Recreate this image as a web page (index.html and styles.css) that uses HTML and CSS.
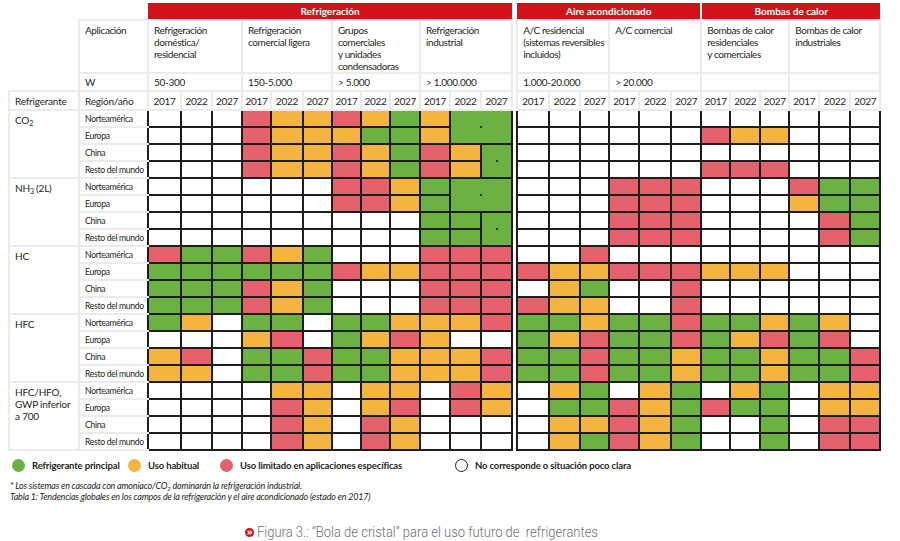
FILE: index.html
```html
<!DOCTYPE html>
<html lang="es">
<head>
<meta charset="utf-8">
<title>Bola de cristal</title>
<link rel="stylesheet" href="styles.css">
</head>
<body>
<table class="chart">
<colgroup>
<col class="c-ref"><col class="c-reg">
<col class="w33"><col class="w31"><col class="w30"><col class="w29"><col class="w32"><col class="w29"><col class="w29"><col class="w29"><col class="w30"><col class="w30"><col class="w31"><col class="w31">
<col class="c-gap">
<col class="w32"><col class="w31"><col class="w29"><col class="w30"><col class="w32"><col class="w30"><col class="w29"><col class="w30"><col class="w29"><col class="w30"><col class="w31"><col class="w30">
</colgroup>
<tr class="ra"><td></td><td></td><td colspan="12" class="red">Refrigeración</td><td class="gap"></td><td colspan="6" class="red split">Aire acondicionado</td><td colspan="6" class="red">Bombas de calor</td></tr>
<tr class="rb"><td></td><td class="hd app">Aplicación</td><td colspan="3" class="hd app">Refrigeración<br>doméstica/<br>residencial</td><td colspan="3" class="hd app">Refrigeración<br>comercial ligera</td><td colspan="3" class="hd app">Grupos<br>comerciales<br>y unidades<br>condensadoras</td><td colspan="3" class="hd app">Refrigeración<br>industrial</td><td class="gap"></td><td colspan="3" class="hd app">A/C residencial<br>(sistemas reversibles<br>incluidos)</td><td colspan="3" class="hd app">A/C comercial</td><td colspan="3" class="hd app">Bombas de calor<br>residenciales<br>y comerciales</td><td colspan="3" class="hd app">Bombas de calor<br>industriales</td></tr>
<tr class="rc"><td></td><td class="hd pw">W</td><td colspan="3" class="hd pw">50-300</td><td colspan="3" class="hd pw">150-5.000</td><td colspan="3" class="hd pw">&gt; 5.000</td><td colspan="3" class="hd pw">&gt; 1.000.000</td><td class="gap"></td><td colspan="3" class="hd pw">1.000-20.000</td><td colspan="3" class="hd pw">&gt; 20.000</td><td colspan="3" class="hd pw"></td><td colspan="3" class="hd pw"></td></tr>
<tr class="rd"><td class="hd lab">Refrigerante</td><td class="hd lab">Región/año</td><td class="hd yr">2017</td><td class="hd yr">2022</td><td class="hd yr">2027</td><td class="hd yr">2017</td><td class="hd yr">2022</td><td class="hd yr">2027</td><td class="hd yr">2017</td><td class="hd yr">2022</td><td class="hd yr">2027</td><td class="hd yr">2017</td><td class="hd yr">2022</td><td class="hd yr">2027</td><td class="gap"></td><td class="hd yr">2017</td><td class="hd yr">2022</td><td class="hd yr">2027</td><td class="hd yr">2017</td><td class="hd yr">2022</td><td class="hd yr">2027</td><td class="hd yr">2017</td><td class="hd yr">2022</td><td class="hd yr">2027</td><td class="hd yr">2017</td><td class="hd yr">2022</td><td class="hd yr">2027</td></tr>

<!-- CO2 -->
<tr class="dr"><td rowspan="4" class="ref">CO<sub>2</sub></td><td class="reg">Norteamérica</td>
<td class="w"></td><td class="w"></td><td class="w"></td><td class="r"></td><td class="o"></td><td class="o"></td><td class="r"></td><td class="o"></td><td class="g"></td><td class="o"></td><td class="g" colspan="2" rowspan="2"><i class="dot"></i></td>
<td class="gap"></td>
<td class="w"></td><td class="w"></td><td class="w"></td><td class="w"></td><td class="w"></td><td class="w"></td><td class="w"></td><td class="w"></td><td class="w"></td><td class="w"></td><td class="w"></td><td class="w"></td></tr>
<tr class="dr"><td class="reg">Europa</td>
<td class="w"></td><td class="w"></td><td class="w"></td><td class="r"></td><td class="o"></td><td class="o"></td><td class="o"></td><td class="g"></td><td class="g"></td><td class="o"></td>
<td class="gap"></td>
<td class="w"></td><td class="w"></td><td class="w"></td><td class="w"></td><td class="w"></td><td class="w"></td><td class="r"></td><td class="o"></td><td class="o"></td><td class="w"></td><td class="w"></td><td class="w"></td></tr>
<tr class="dr"><td class="reg">China</td>
<td class="w"></td><td class="w"></td><td class="w"></td><td class="r"></td><td class="o"></td><td class="o"></td><td class="r"></td><td class="o"></td><td class="g"></td><td class="r"></td><td class="o"></td><td class="g" rowspan="2"><i class="dot"></i></td>
<td class="gap"></td>
<td class="w"></td><td class="w"></td><td class="w"></td><td class="w"></td><td class="w"></td><td class="w"></td><td class="w"></td><td class="w"></td><td class="w"></td><td class="w"></td><td class="w"></td><td class="w"></td></tr>
<tr class="dr"><td class="reg">Resto del mundo</td>
<td class="w"></td><td class="w"></td><td class="w"></td><td class="r"></td><td class="o"></td><td class="o"></td><td class="r"></td><td class="o"></td><td class="g"></td><td class="r"></td><td class="o"></td>
<td class="gap"></td>
<td class="w"></td><td class="w"></td><td class="w"></td><td class="w"></td><td class="w"></td><td class="w"></td><td class="r"></td><td class="r"></td><td class="r"></td><td class="w"></td><td class="w"></td><td class="w"></td></tr>

<!-- NH3 -->
<tr class="dr"><td rowspan="4" class="ref">NH<sub>3</sub> (2L)</td><td class="reg">Norteamérica</td>
<td class="w"></td><td class="w"></td><td class="w"></td><td class="w"></td><td class="w"></td><td class="w"></td><td class="r"></td><td class="r"></td><td class="o"></td><td class="g"></td><td class="g" colspan="2" rowspan="2"><i class="dot"></i></td>
<td class="gap"></td>
<td class="w"></td><td class="w"></td><td class="w"></td><td class="r"></td><td class="r"></td><td class="r"></td><td class="w"></td><td class="w"></td><td class="w"></td><td class="r"></td><td class="g"></td><td class="g"></td></tr>
<tr class="dr"><td class="reg">Europa</td>
<td class="w"></td><td class="w"></td><td class="w"></td><td class="w"></td><td class="w"></td><td class="w"></td><td class="r"></td><td class="r"></td><td class="o"></td><td class="g"></td>
<td class="gap"></td>
<td class="w"></td><td class="w"></td><td class="w"></td><td class="r"></td><td class="r"></td><td class="r"></td><td class="w"></td><td class="w"></td><td class="w"></td><td class="o"></td><td class="g"></td><td class="g"></td></tr>
<tr class="dr"><td class="reg">China</td>
<td class="w"></td><td class="w"></td><td class="w"></td><td class="w"></td><td class="w"></td><td class="w"></td><td class="w"></td><td class="w"></td><td class="w"></td><td class="g"></td><td class="g"></td><td class="g" rowspan="2"><i class="dot"></i></td>
<td class="gap"></td>
<td class="w"></td><td class="w"></td><td class="w"></td><td class="r"></td><td class="r"></td><td class="r"></td><td class="w"></td><td class="w"></td><td class="w"></td><td class="w"></td><td class="r"></td><td class="g"></td></tr>
<tr class="dr"><td class="reg">Resto del mundo</td>
<td class="w"></td><td class="w"></td><td class="w"></td><td class="w"></td><td class="w"></td><td class="w"></td><td class="w"></td><td class="w"></td><td class="w"></td><td class="g"></td><td class="g"></td>
<td class="gap"></td>
<td class="w"></td><td class="w"></td><td class="w"></td><td class="r"></td><td class="r"></td><td class="r"></td><td class="w"></td><td class="w"></td><td class="w"></td><td class="w"></td><td class="r"></td><td class="g"></td></tr>

<!-- HC -->
<tr class="dr"><td rowspan="4" class="ref">HC</td><td class="reg">Norteamérica</td>
<td class="r"></td><td class="g"></td><td class="g"></td><td class="r"></td><td class="o"></td><td class="g"></td><td class="w"></td><td class="w"></td><td class="w"></td><td class="r"></td><td class="r"></td><td class="r"></td>
<td class="gap"></td>
<td class="w"></td><td class="w"></td><td class="r"></td><td class="w"></td><td class="w"></td><td class="w"></td><td class="w"></td><td class="w"></td><td class="w"></td><td class="w"></td><td class="w"></td><td class="w"></td></tr>
<tr class="dr"><td class="reg">Europa</td>
<td class="g"></td><td class="g"></td><td class="g"></td><td class="g"></td><td class="g"></td><td class="g"></td><td class="r"></td><td class="o"></td><td class="o"></td><td class="r"></td><td class="r"></td><td class="r"></td>
<td class="gap"></td>
<td class="r"></td><td class="o"></td><td class="o"></td><td class="r"></td><td class="r"></td><td class="r"></td><td class="o"></td><td class="o"></td><td class="o"></td><td class="w"></td><td class="w"></td><td class="w"></td></tr>
<tr class="dr"><td class="reg">China</td>
<td class="g"></td><td class="g"></td><td class="g"></td><td class="r"></td><td class="o"></td><td class="g"></td><td class="w"></td><td class="w"></td><td class="w"></td><td class="r"></td><td class="r"></td><td class="r"></td>
<td class="gap"></td>
<td class="w"></td><td class="o"></td><td class="g"></td><td class="w"></td><td class="w"></td><td class="r"></td><td class="w"></td><td class="w"></td><td class="w"></td><td class="w"></td><td class="w"></td><td class="w"></td></tr>
<tr class="dr"><td class="reg">Resto del mundo</td>
<td class="g"></td><td class="g"></td><td class="g"></td><td class="r"></td><td class="o"></td><td class="g"></td><td class="w"></td><td class="w"></td><td class="w"></td><td class="r"></td><td class="r"></td><td class="r"></td>
<td class="gap"></td>
<td class="r"></td><td class="o"></td><td class="o"></td><td class="w"></td><td class="w"></td><td class="r"></td><td class="w"></td><td class="w"></td><td class="w"></td><td class="w"></td><td class="w"></td><td class="w"></td></tr>

<!-- HFC -->
<tr class="dr"><td rowspan="4" class="ref">HFC</td><td class="reg">Norteamérica</td>
<td class="g"></td><td class="o"></td><td class="w"></td><td class="g"></td><td class="g"></td><td class="w"></td><td class="g"></td><td class="g"></td><td class="o"></td><td class="o"></td><td class="o"></td><td class="r"></td>
<td class="gap"></td>
<td class="g"></td><td class="g"></td><td class="o"></td><td class="g"></td><td class="g"></td><td class="r"></td><td class="g"></td><td class="g"></td><td class="o"></td><td class="g"></td><td class="o"></td><td class="w"></td></tr>
<tr class="dr"><td class="reg">Europa</td>
<td class="w"></td><td class="w"></td><td class="w"></td><td class="o"></td><td class="r"></td><td class="w"></td><td class="g"></td><td class="o"></td><td class="r"></td><td class="o"></td><td class="w"></td><td class="w"></td>
<td class="gap"></td>
<td class="g"></td><td class="o"></td><td class="r"></td><td class="g"></td><td class="g"></td><td class="r"></td><td class="g"></td><td class="o"></td><td class="r"></td><td class="g"></td><td class="r"></td><td class="w"></td></tr>
<tr class="dr"><td class="reg">China</td>
<td class="o"></td><td class="r"></td><td class="w"></td><td class="g"></td><td class="g"></td><td class="r"></td><td class="g"></td><td class="g"></td><td class="o"></td><td class="o"></td><td class="o"></td><td class="r"></td>
<td class="gap"></td>
<td class="g"></td><td class="g"></td><td class="r"></td><td class="g"></td><td class="g"></td><td class="o"></td><td class="g"></td><td class="g"></td><td class="o"></td><td class="g"></td><td class="g"></td><td class="r"></td></tr>
<tr class="dr"><td class="reg">Resto del mundo</td>
<td class="o"></td><td class="o"></td><td class="w"></td><td class="g"></td><td class="g"></td><td class="r"></td><td class="g"></td><td class="g"></td><td class="o"></td><td class="o"></td><td class="o"></td><td class="r"></td>
<td class="gap"></td>
<td class="g"></td><td class="g"></td><td class="r"></td><td class="g"></td><td class="g"></td><td class="o"></td><td class="g"></td><td class="g"></td><td class="o"></td><td class="g"></td><td class="g"></td><td class="r"></td></tr>

<!-- HFC/HFO -->
<tr class="dr"><td rowspan="4" class="ref">HFC/HFO,<br>GWP inferior<br>a 700</td><td class="reg">Norteamérica</td>
<td class="w"></td><td class="w"></td><td class="w"></td><td class="w"></td><td class="o"></td><td class="o"></td><td class="w"></td><td class="o"></td><td class="o"></td><td class="w"></td><td class="r"></td><td class="o"></td>
<td class="gap"></td>
<td class="w"></td><td class="o"></td><td class="g"></td><td class="w"></td><td class="o"></td><td class="g"></td><td class="w"></td><td class="o"></td><td class="g"></td><td class="w"></td><td class="o"></td><td class="o"></td></tr>
<tr class="dr"><td class="reg">Europa</td>
<td class="w"></td><td class="w"></td><td class="w"></td><td class="w"></td><td class="r"></td><td class="o"></td><td class="w"></td><td class="o"></td><td class="r"></td><td class="w"></td><td class="r"></td><td class="o"></td>
<td class="gap"></td>
<td class="w"></td><td class="g"></td><td class="g"></td><td class="r"></td><td class="o"></td><td class="g"></td><td class="r"></td><td class="g"></td><td class="g"></td><td class="w"></td><td class="o"></td><td class="o"></td></tr>
<tr class="dr"><td class="reg">China</td>
<td class="w"></td><td class="w"></td><td class="w"></td><td class="w"></td><td class="r"></td><td class="o"></td><td class="w"></td><td class="r"></td><td class="o"></td><td class="w"></td><td class="w"></td><td class="w"></td>
<td class="gap"></td>
<td class="w"></td><td class="o"></td><td class="o"></td><td class="r"></td><td class="o"></td><td class="g"></td><td class="w"></td><td class="w"></td><td class="g"></td><td class="w"></td><td class="r"></td><td class="r"></td></tr>
<tr class="dr"><td class="reg">Resto del mundo</td>
<td class="w"></td><td class="w"></td><td class="w"></td><td class="w"></td><td class="r"></td><td class="o"></td><td class="w"></td><td class="r"></td><td class="o"></td><td class="w"></td><td class="w"></td><td class="w"></td>
<td class="gap"></td>
<td class="w"></td><td class="o"></td><td class="g"></td><td class="r"></td><td class="o"></td><td class="g"></td><td class="w"></td><td class="w"></td><td class="g"></td><td class="w"></td><td class="r"></td><td class="r"></td></tr>
</table>

<div class="legend">
  <span class="item"><span class="sw sw-green"></span>Refrigerante principal</span>
  <span class="item"><span class="sw sw-orange"></span>Uso habitual</span>
  <span class="item"><span class="sw sw-red"></span>Uso limitado en aplicaciones específicas</span>
  <span class="item"><span class="sw sw-none"></span>No corresponde o situación poco clara</span>
</div>
<p class="note">* Los sistemas en cascada con amoníaco/CO<sub>2</sub> dominarán la refrigeración industrial.<br>Tabla 1: Tendencias globales en los campos de la refrigeración y el aire acondicionado (estado en 2017)</p>

<div class="caption">
  <svg class="cap-icon" width="9" height="9" viewBox="0 0 9 9"><circle cx="4.5" cy="4.5" r="4.5" fill="#d3131c"/><path d="M2.6 2.6 L4.4 4.5 L2.6 6.4 M4.8 2.6 L6.6 4.5 L4.8 6.4" stroke="#fff" stroke-width="1.1" fill="none"/></svg>
  <span class="cap-text">Figura 3.: “Bola de cristal” para el uso futuro de&nbsp; refrigerantes</span>
</div>
</body>
</html>
```

FILE: styles.css
```css
html, body {
  background: #ffffff;
}
body {
  margin: 3px 0 0 8px;
  font-family: Lato, "Open Sans", sans-serif;
  color: #231f20;
}

.chart {
  border-collapse: collapse;
  table-layout: fixed;
  width: 871px;
}
.chart td {
  padding: 0;
  font-size: 10px;
  line-height: 12px;
}
.c-ref { width: 70px; }
.c-reg { width: 69px; }
.c-gap { width: 5px; }
.w29 { width: 29px; }
.w30 { width: 30px; }
.w31 { width: 31px; }
.w32 { width: 32px; }
.w33 { width: 33px; }

.ra td { height: 16px; }
.rb td { height: 48px; }
.rc td { height: 16px; }
.rd td { height: 17px; }
.dr td { height: 15px; }

.red {
  background: #d1121b;
  color: #fff;
  font-weight: 700;
  font-size: 10.5px;
  text-align: center;
  vertical-align: middle;
  border-bottom: 1px solid #f3f3f3;
}
.split { border-right: 2px solid #fff; }

.hd {
  border: 2px solid #ebebeb;
}
.app {
  vertical-align: top;
  padding: 3px 0 0 5px !important;
  letter-spacing: -0.4px;
  white-space: nowrap;
}
.pw {
  vertical-align: middle;
  padding-left: 5px !important;
  letter-spacing: -0.3px;
}
.lab {
  vertical-align: middle;
  padding-left: 5px !important;
  font-size: 10px;
  letter-spacing: -0.2px;
}
.yr {
  text-align: center;
  vertical-align: middle;
  font-size: 9.5px;
  letter-spacing: -0.3px;
}
.gap {
  border: none;
  background: #fff;
}

.ref {
  vertical-align: top;
  padding: 3px 0 0 5px !important;
  font-size: 10.5px;
  border: 2px solid #ebebeb;
  letter-spacing: -0.2px;
}
.ref sub {
  font-size: 7px;
  vertical-align: -2px;
  line-height: 0;
}
.reg {
  vertical-align: middle;
  padding-left: 5px !important;
  font-size: 8.7px !important;
  letter-spacing: -0.35px;
  white-space: nowrap;
  overflow: hidden;
  border-top: 2px solid #ebebeb;
  border-bottom: 2px solid #ebebeb;
  border-left: 2px solid #ebebeb;
}

.w, .r, .o, .g {
  border: 2px solid #1d1d1d;
  text-align: center;
  vertical-align: middle;
}
.w { background: #ffffff; }
.r { background: #e5626c; }
.o { background: #f5b33f; }
.g { background: #6cb242; }

.dot {
  display: block;
  width: 2px;
  height: 2px;
  margin: 0 auto;
  background: #111;
  border-radius: 50%;
}

.legend {
  display: grid;
  grid-template-columns: 116px 92px 235px auto;
  padding-left: 4px;
  margin-top: 8px;
  font-size: 9.5px;
  font-weight: 700;
  letter-spacing: -0.15px;
  line-height: 13px;
}
.item {
  display: flex;
  align-items: center;
  gap: 7px;
  white-space: nowrap;
}
.sw {
  width: 13px;
  height: 13px;
  border-radius: 50%;
  flex: none;
  box-sizing: border-box;
}
.sw-green { background: #6cb242; }
.sw-orange { background: #f5b33f; }
.sw-red { background: #e5626c; }
.sw-none { background: #fff; border: 1.5px solid #1d1d1d; }

.note {
  margin: 8px 0 0 2px;
  font-size: 9px;
  font-style: italic;
  line-height: 11px;
  letter-spacing: -0.2px;
}
.note sub {
  font-size: 6px;
  vertical-align: -2px;
  line-height: 0;
}

.caption {
  display: flex;
  align-items: center;
  gap: 3px;
  margin-top: 22px;
  padding-left: 237px;
  color: #707070;
}
.cap-icon { flex: none; }
.cap-text {
  display: inline-block;
  font-family: Roboto, sans-serif;
  font-weight: 300;
  font-size: 15px;
  line-height: 16px;
  transform: scaleX(0.865);
  transform-origin: left center;
  white-space: nowrap;
}
```
